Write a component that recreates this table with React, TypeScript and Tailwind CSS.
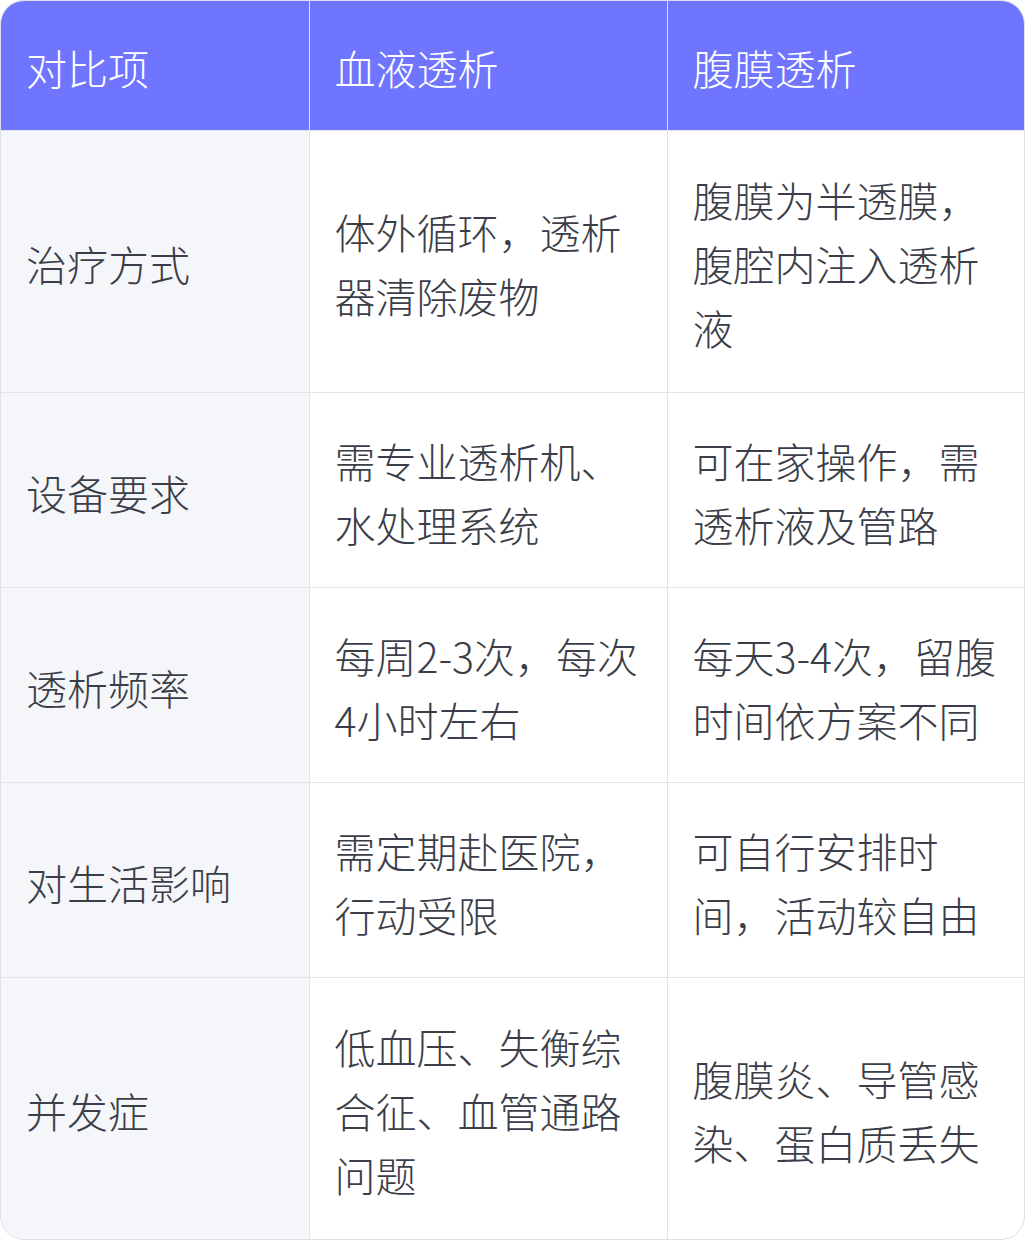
interface IRow {
  item: string;
  hemo: string;
  peri: string;
}

const rows: IRow[] = [
  { item: '治疗方式', hemo: '体外循环，透析器清除废物', peri: '腹膜为半透膜，腹腔内注入透析液' },
  { item: '设备要求', hemo: '需专业透析机、水处理系统', peri: '可在家操作，需透析液及管路' },
  { item: '透析频率', hemo: '每周2-3次，每次4小时左右', peri: '每天3-4次，留腹时间依方案不同' },
  { item: '对生活影响', hemo: '需定期赴医院，行动受限', peri: '可自行安排时间，活动较自由' },
  { item: '并发症', hemo: '低血压、失衡综合征、血管通路问题', peri: '腹膜炎、导管感染、蛋白质丢失' },
];

function App() {
  return (
    <div
      className="w-[1025px] h-[1240px] bg-white"
      style={{ fontFamily: '"Noto Sans CJK SC", sans-serif' }}
    >
      <div className="h-full overflow-hidden rounded-[24px] border border-[#dedfe3]">
        <table className="w-full h-full border-collapse table-fixed text-[41px] leading-[64px] font-light">
          <colgroup>
            <col className="w-[308px]" />
            <col className="w-[358px]" />
            <col />
          </colgroup>
          <thead className="bg-[#6f75ff] text-white">
            <tr className="h-[129px]">
              <th className="px-[25px] pt-[4px] text-left font-light">对比项</th>
              <th className="px-[25px] pt-[4px] text-left font-light border-l border-[#d9dbff]">血液透析</th>
              <th className="px-[25px] pt-[4px] text-left font-light border-l border-[#d9dbff]">腹膜透析</th>
            </tr>
          </thead>
          <tbody className="text-[#3b3e48]">
            {rows.map((row, i) => (
              <tr
                key={row.item}
                className={i === 0 || i === 4 ? 'h-[262px] border-t border-[#e3e4e8]' : 'h-[195px] border-t border-[#e3e4e8]'}
              >
                <td className="px-[25px] pt-[4px] bg-[#f5f6fa] align-middle">{row.item}</td>
                <td className="px-[25px] pt-[4px] border-l border-[#e3e4e8] align-middle">{row.hemo}</td>
                <td className="px-[25px] pt-[4px] border-l border-[#e3e4e8] align-middle">{row.peri}</td>
              </tr>
            ))}
          </tbody>
        </table>
      </div>
    </div>
  );
}

export default App;
